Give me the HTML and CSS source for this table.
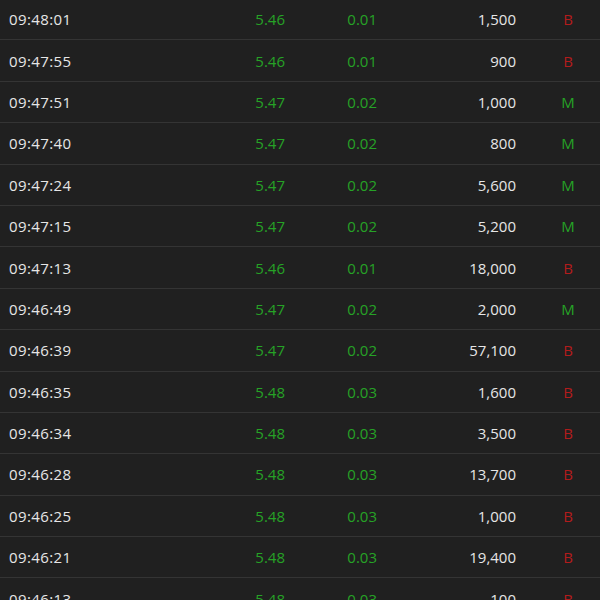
FILE: index.html
```html
<!DOCTYPE html>
<html lang="en">
<head>
  <meta charset="UTF-8">
  <meta name="viewport" content="width=device-width, initial-scale=1.0">
  <title>Trades</title>
  <link rel="stylesheet" href="styles.css">
</head>
<body>
  <div class="trades">
    <div class="row"><span class="time">09:48:01</span><span class="price">5.46</span><span class="chg">0.01</span><span class="vol">1,500</span><span class="side buy">B</span></div>
    <div class="row"><span class="time">09:47:55</span><span class="price">5.46</span><span class="chg">0.01</span><span class="vol">900</span><span class="side buy">B</span></div>
    <div class="row"><span class="time">09:47:51</span><span class="price">5.47</span><span class="chg">0.02</span><span class="vol">1,000</span><span class="side mid">M</span></div>
    <div class="row"><span class="time">09:47:40</span><span class="price">5.47</span><span class="chg">0.02</span><span class="vol">800</span><span class="side mid">M</span></div>
    <div class="row"><span class="time">09:47:24</span><span class="price">5.47</span><span class="chg">0.02</span><span class="vol">5,600</span><span class="side mid">M</span></div>
    <div class="row"><span class="time">09:47:15</span><span class="price">5.47</span><span class="chg">0.02</span><span class="vol">5,200</span><span class="side mid">M</span></div>
    <div class="row"><span class="time">09:47:13</span><span class="price">5.46</span><span class="chg">0.01</span><span class="vol">18,000</span><span class="side buy">B</span></div>
    <div class="row"><span class="time">09:46:49</span><span class="price">5.47</span><span class="chg">0.02</span><span class="vol">2,000</span><span class="side mid">M</span></div>
    <div class="row"><span class="time">09:46:39</span><span class="price">5.47</span><span class="chg">0.02</span><span class="vol">57,100</span><span class="side buy">B</span></div>
    <div class="row"><span class="time">09:46:35</span><span class="price">5.48</span><span class="chg">0.03</span><span class="vol">1,600</span><span class="side buy">B</span></div>
    <div class="row"><span class="time">09:46:34</span><span class="price">5.48</span><span class="chg">0.03</span><span class="vol">3,500</span><span class="side buy">B</span></div>
    <div class="row"><span class="time">09:46:28</span><span class="price">5.48</span><span class="chg">0.03</span><span class="vol">13,700</span><span class="side buy">B</span></div>
    <div class="row"><span class="time">09:46:25</span><span class="price">5.48</span><span class="chg">0.03</span><span class="vol">1,000</span><span class="side buy">B</span></div>
    <div class="row"><span class="time">09:46:21</span><span class="price">5.48</span><span class="chg">0.03</span><span class="vol">19,400</span><span class="side buy">B</span></div>
    <div class="row"><span class="time">09:46:13</span><span class="price">5.48</span><span class="chg">0.03</span><span class="vol">100</span><span class="side buy">B</span></div>
  </div>
</body>
</html>
```

FILE: styles.css
```css
body { margin: 0; background: #202020; color: #e6e6e6; font-family: "Open Sans", "DejaVu Sans", sans-serif; font-size: 15px; overflow: hidden; }
.trades { margin-top: -1px; }
.row { display: grid; grid-template-columns: 200px 76px 92px 139px 1fr; align-items: center; height: 40.4px; padding-left: 9px; border-bottom: 1px solid #343434; }
.time { letter-spacing: 0.4px; }
.price, .chg, .vol { text-align: right; }
.price, .chg { color: #26a226; }
.side { text-align: center; padding-left: 20px; }
.buy { color: #b21c1c; }
.mid { color: #26a226; }
```
